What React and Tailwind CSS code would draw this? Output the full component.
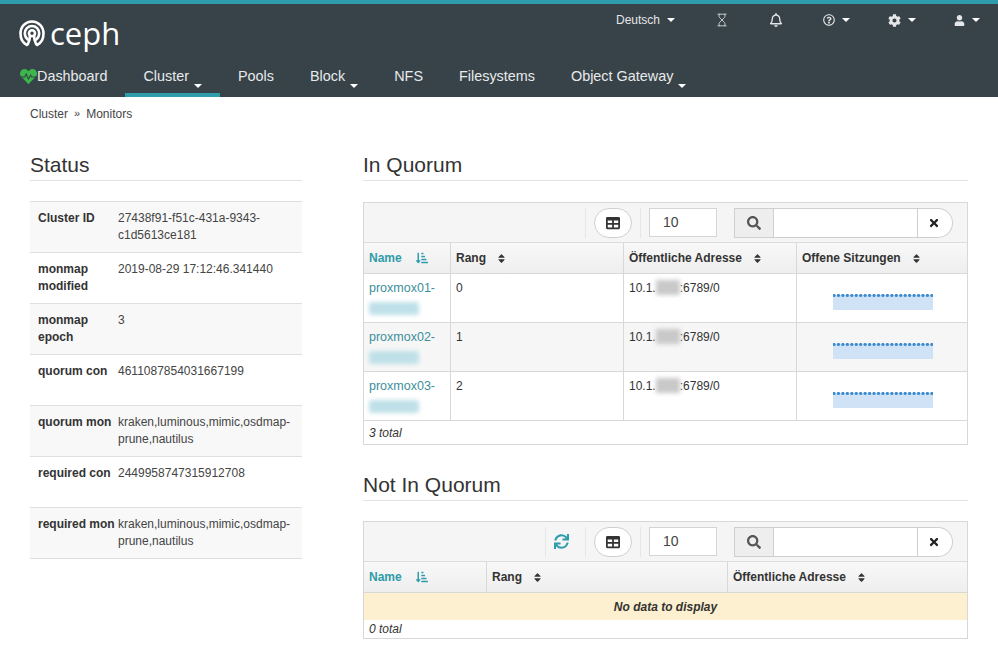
import React from "react";
import { FaHeartbeat, FaRegBell, FaRegQuestionCircle, FaCog, FaUser, FaTable, FaSortAmountDownAlt, FaSort, FaSearch, FaTimes, FaSync } from "react-icons/fa";
import { Hourglass } from "lucide-react";

function Caret({ className = "border-t-white" }) {
  return <span className={"inline-block w-0 h-0 border-x-[4px] border-x-transparent border-t-[4px] " + className} />;
}

function Logo() {
  return (
    <svg width="26" height="27" viewBox="0 0 26 27" fill="none" stroke="white" strokeWidth="2.6" strokeLinecap="round" className="shrink-0">
      <path d="M8 25C3.8 23 1.5 18.6 1.5 13.5C1.5 6.6 6.6 1.5 13 1.5C19.4 1.5 24.5 6.6 24.5 13.5C24.5 18.6 22.2 23 18 25" />
      <path d="M8.7 19.5C6.8 18 5.8 15.8 5.8 13.3C5.8 9.1 9 6 13 6C17 6 20.2 9.1 20.2 13.3C20.2 15.8 19.2 18 17.3 19.5" />
      <circle cx="13" cy="13.3" r="3" />
      <path d="M10.8 16.2C11 19 10.4 21.5 8.9 24M15.2 16.2C15 19 15.6 21.5 17.1 24" />
    </svg>
  );
}

function TopItem({ children, className = "" }) {
  return <div className={"flex items-center gap-[7px] text-[#e4e6e7] " + className}>{children}</div>;
}

function NavItem({ children, active, caret, className = "" }) {
  return (
    <div className={"h-[37px] px-[18px] flex items-start pt-[8px] gap-[5px] text-[14.4px] leading-[17px] text-[#e8eaeb] border-b-[4px] " + (active ? "border-[#2f9cab] " : "border-transparent ") + className}>
      {children}
      {caret && <span className="mt-[7px]"><Caret /></span>}
    </div>
  );
}

function StatusRow({ k, v, shaded }) {
  return (
    <div className={"grid grid-cols-[80px_1fr] h-[51px] border-t border-[#dfdfdf] px-[8px] pt-[8px] text-[12px] leading-[17px] " + (shaded ? "bg-[#f8f8f8]" : "bg-white")}>
      <div className="font-bold text-[#333]">{k}</div>
      <div className="text-[#444] break-words">{v}</div>
    </div>
  );
}

function Sep() {
  return <div className="w-px self-stretch bg-[#e6e6e6]" />;
}

function Toolbar({ refresh }) {
  return (
    <div className="h-[40px] bg-[#f5f5f5] border-b border-[#dcdcdc] flex items-center justify-end pr-[14px]">
      {refresh && (
        <div className="flex items-center h-[30px] mr-[8px]">
          <Sep />
          <FaSync className="mx-[8px] text-[#2f9cab]" size={15} />
        </div>
      )}
      <div className="flex items-center h-[30px]">
        <Sep />
        <div className="ml-[8px] mr-[8px] w-[38px] h-[30px] rounded-full border border-[#cfcfcf] bg-white flex items-center justify-center text-[#333]">
          <FaTable size={14} />
        </div>
        <Sep />
      </div>
      <div className="ml-[8px] w-[68px] h-[29px] bg-white border border-[#d5d5d5] text-[14px] text-[#444] flex items-center pl-[13px]">10</div>
      <div className="ml-[8px] mr-[8px] h-[30px]"><Sep /></div>
      <div className="w-[219px] h-[30px] flex border border-[#cfcfcf] rounded-l-[5px] rounded-r-full bg-white overflow-hidden">
        <div className="w-[39px] bg-[#eeeeee] border-r border-[#cfcfcf] flex items-center justify-center text-[#555]"><FaSearch size={14} /></div>
        <div className="flex-1 border-r border-[#cfcfcf]" />
        <div className="w-[34px] flex items-center justify-center text-[#222] pr-[2px]"><FaTimes size={12} /></div>
      </div>
    </div>
  );
}

function HeaderCell({ children, sorted, last, caretGap = "gap-[10px]" }) {
  return (
    <div className={"h-[30px] flex items-center px-[5px] text-[12px] font-bold border-[#d8d8d8] " + caretGap + (last ? " " : " border-r ") + (sorted ? "text-[#2f9cab]" : "text-[#333]")}>
      <span>{children}</span>
      {sorted ? <FaSortAmountDownAlt size={12} className="ml-[4px]" /> : <FaSort size={11} className="text-[#333]" />}
    </div>
  );
}

function Spark() {
  const dots = Array.from({ length: 23 }, (_, i) => i);
  return (
    <svg width="100" height="16" viewBox="0 0 100 16" className="block">
      <rect x="0" y="1" width="100" height="15" fill="#cfe2f6" />
      {dots.map((i) => (
        <circle key={i} cx={1 + i * 4.45} cy="1.5" r="1.6" fill="#3d8bcf" />
      ))}
    </svg>
  );
}

function Row({ n, rank, shaded }) {
  const bg = shaded ? "bg-[#f6f6f6]" : "bg-white";
  return (
    <div className={"grid grid-cols-[87px_173px_173px_1fr] h-[49px] border-b border-[#d8d8d8] text-[12px] leading-[17px] " + bg}>
      <div className="border-r border-[#d8d8d8] px-[5px] pt-[6px] text-[#3c8f9c] text-[12.5px]">
        <div>proxmox0{n}-</div>
        <div className="mt-[5px] w-[50px] h-[13px] rounded-[3px] bg-[#bfe0e8] blur-[2px]" />
      </div>
      <div className="border-r border-[#d8d8d8] px-[5px] pt-[6px] text-[#333]">{rank}</div>
      <div className="border-r border-[#d8d8d8] px-[5px] pt-[6px] text-[#333] flex items-start overflow-hidden">
        <span>10.1.</span>
        <span className="w-[24px] h-[15px] bg-[#c9c9c9] blur-[2px] shrink-0" />
        <span>:6789/0</span>
      </div>
      <div className="pt-[20px] pl-[36px]"><Spark /></div>
    </div>
  );
}

function Heading({ children }) {
  return <h2 className="text-[21px] leading-[26px] text-[#333] pb-[2px] border-b border-[#e3e3e3] h-[29px]">{children}</h2>;
}

export default function App() {
  return (
    <div className="w-[998px] h-[658px] overflow-hidden bg-white" style={{ fontFamily: '"Liberation Sans", Arial, sans-serif' }}>
      <header className="h-[97px] bg-[#374249] border-t-[4px] border-[#2f9cab]">
        <div className="h-[56px] flex items-start justify-between">
          <div className="flex items-center pl-[19px] pt-[13px] gap-[5px]">
            <Logo />
            <span className="text-[31px] leading-[32px] text-white font-normal" style={{ fontFamily: '"Open Sans", sans-serif' }}>ceph</span>
          </div>
          <div className="flex items-center h-[32px] text-[12px]">
            <TopItem className="w-[61px]"><span>Deutsch</span><Caret /></TopItem>
            <div className="ml-[38px] text-[#e4e6e7]"><Hourglass size={14} strokeWidth={1.4} /></div>
            <div className="ml-[40px] text-[#e4e6e7]"><FaRegBell size={14} /></div>
            <TopItem className="ml-[40px]"><FaRegQuestionCircle size={12} /><Caret /></TopItem>
            <TopItem className="ml-[38px]"><FaCog size={13} /><Caret /></TopItem>
            <TopItem className="ml-[38px] mr-[18px]"><FaUser size={11} /><Caret /></TopItem>
          </div>
        </div>
        <nav className="flex pl-[2px]">
          <NavItem className="!gap-0"><FaHeartbeat size={17} className="text-[#3cb54a] shrink-0" />Dashboard</NavItem>
          <NavItem active caret>Cluster</NavItem>
          <NavItem>Pools</NavItem>
          <NavItem caret>Block</NavItem>
          <NavItem>NFS</NavItem>
          <NavItem>Filesystems</NavItem>
          <NavItem caret>Object Gateway</NavItem>
        </nav>
      </header>

      <div className="h-[33px] pl-[30px] flex items-center gap-[6px] text-[12px] text-[#444]">
        <span>Cluster</span><span className="text-[11px]">»</span><span>Monitors</span>
      </div>

      <main className="grid grid-cols-[272px_605px] gap-x-[61px] pl-[30px] pt-[22px]">
        <section>
          <Heading>Status</Heading>
          <div className="mt-[20px] border-b border-[#dfdfdf]">
            <StatusRow shaded k="Cluster ID" v="27438f91-f51c-431a-9343-c1d5613ce181" />
            <StatusRow k="monmap modified" v="2019-08-29 17:12:46.341440" />
            <StatusRow shaded k="monmap epoch" v="3" />
            <StatusRow k="quorum con" v="4611087854031667199" />
            <StatusRow shaded k="quorum mon" v="kraken,luminous,mimic,osdmap-prune,nautilus" />
            <StatusRow k="required con" v="2449958747315912708" />
            <StatusRow shaded k="required mon" v="kraken,luminous,mimic,osdmap-prune,nautilus" />
          </div>
        </section>

        <section>
          <Heading>In Quorum</Heading>
          <div className="mt-[21px] border border-[#d8d8d8]">
            <Toolbar />
            <div className="grid grid-cols-[87px_173px_173px_1fr] bg-gradient-to-b from-[#f8f8f8] to-[#eeeeee] border-b border-[#d8d8d8]">
              <HeaderCell sorted>Name</HeaderCell>
              <HeaderCell>Rang</HeaderCell>
              <HeaderCell>Öffentliche Adresse</HeaderCell>
              <HeaderCell last>Offene Sitzungen</HeaderCell>
            </div>
            <Row n={1} rank={0} />
            <Row n={2} rank={1} shaded />
            <Row n={3} rank={2} />
            <div className="h-[23px] flex items-center px-[5px] text-[12px] italic text-[#333]">3 total</div>
          </div>

          <div className="mt-[27px]"><Heading>Not In Quorum</Heading></div>
          <div className="mt-[20px] border border-[#d8d8d8]">
            <Toolbar refresh />
            <div className="grid grid-cols-[123px_241px_1fr] bg-gradient-to-b from-[#f8f8f8] to-[#eeeeee] border-b border-[#d8d8d8]">
              <HeaderCell sorted>Name</HeaderCell>
              <HeaderCell>Rang</HeaderCell>
              <HeaderCell last>Öffentliche Adresse</HeaderCell>
            </div>
            <div className="h-[27px] bg-[#fdf0d0] flex items-center justify-center text-[12px] font-bold italic text-[#333]">No data to display</div>
            <div className="h-[18px] flex items-center px-[5px] text-[12px] italic text-[#333]">0 total</div>
          </div>
        </section>
      </main>
    </div>
  );
}
